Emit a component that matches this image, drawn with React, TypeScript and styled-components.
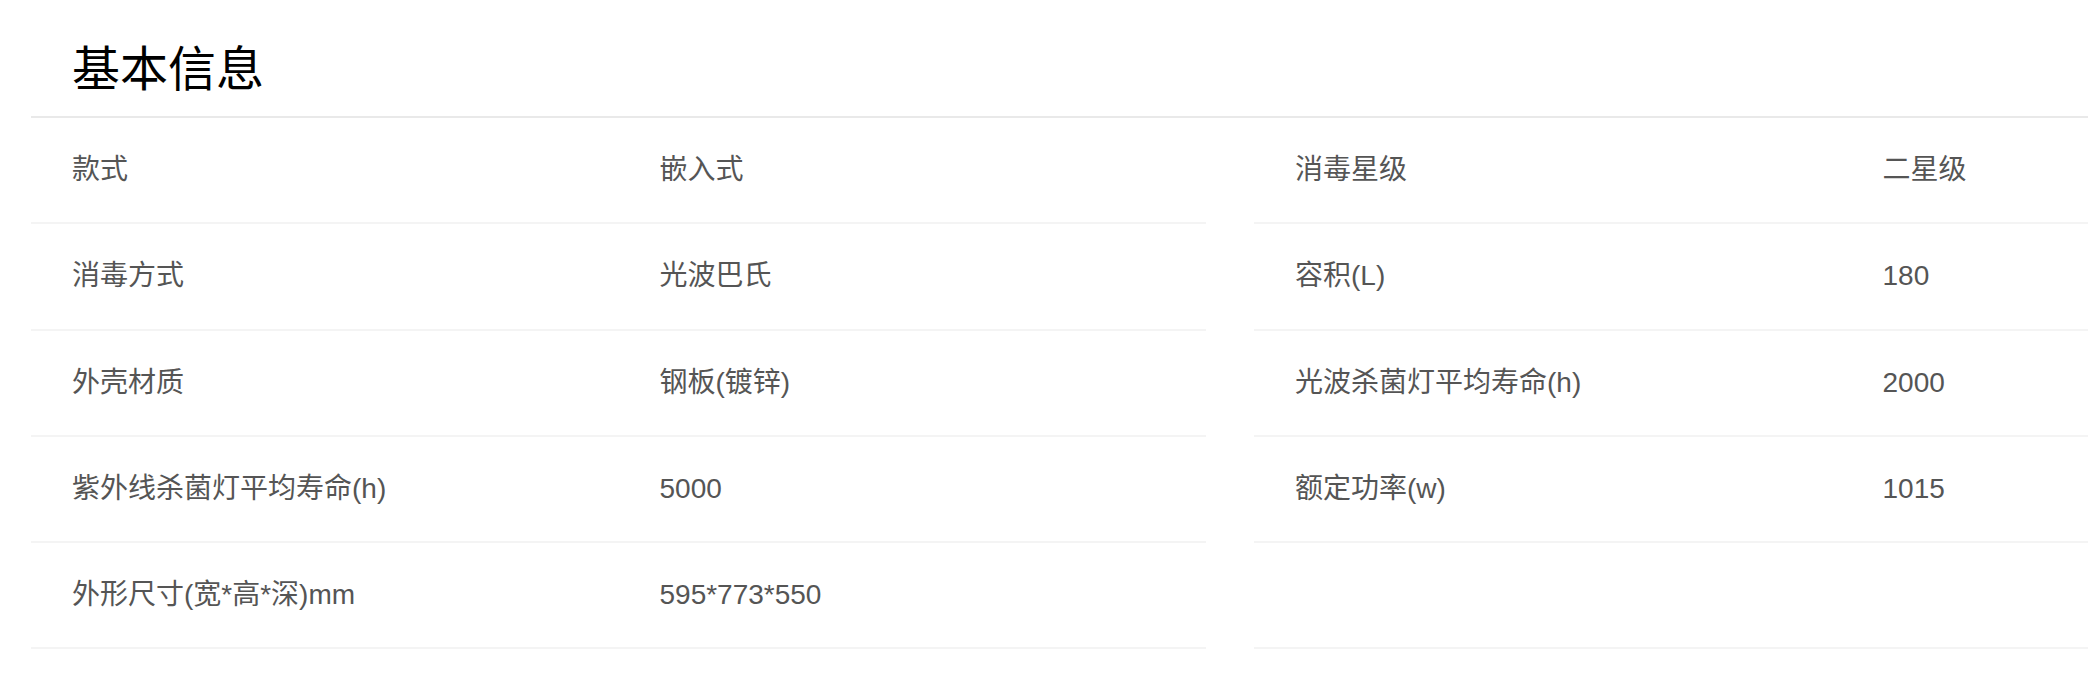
import styled, { createGlobalStyle } from "styled-components";

const GlobalStyle = createGlobalStyle`
  html, body {
    margin: 0;
    padding: 0;
    background: #ffffff;
    overflow: hidden;
  }
  body {
    font-family: "Liberation Sans", "Noto Sans CJK SC", sans-serif;
  }
`;

const leftRows: [string, string][] = [
  ["款式", "嵌入式"],
  ["消毒方式", "光波巴氏"],
  ["外壳材质", "钢板(镀锌)"],
  ["紫外线杀菌灯平均寿命(h)", "5000"],
  ["外形尺寸(宽*高*深)mm", "595*773*550"],
];

const rightRows: [string, string][] = [
  ["消毒星级", "二星级"],
  ["容积(L)", "180"],
  ["光波杀菌灯平均寿命(h)", "2000"],
  ["额定功率(w)", "1015"],
  ["", ""],
];

export default function App() {
  return (
    <>
      <GlobalStyle />
      <Page>
        <Header>
          <Title>基本信息</Title>
        </Header>
        <Tables>
          {[leftRows, rightRows].map((rows, t) => (
            <Table key={t}>
              {rows.map(([label, value], i) => (
                <Row key={i}>
                  <Cell>{label}</Cell>
                  <Cell>{value}</Cell>
                </Row>
              ))}
            </Table>
          ))}
        </Tables>
      </Page>
    </>
  );
}

const Page = styled.div`
  padding-left: 31px;
  width: 2398px;
`;

const Header = styled.div`
  box-sizing: border-box;
  height: 118px;
  padding: 46px 0 0 41px;
  border-bottom: 2px solid #e9e9e9;
`;

const Title = styled.h2`
  margin: 0;
  font-size: 48px;
  line-height: 48px;
  font-weight: 400;
  color: #000000;
`;

const Tables = styled.div`
  display: flex;
  gap: 48px;
`;

const Table = styled.div`
  width: 1176px;
  display: flex;
  flex-direction: column;
`;

const Row = styled.div`
  box-sizing: border-box;
  height: 106.25px;
  display: grid;
  grid-template-columns: 1fr 1fr;
  align-items: center;
  border-bottom: 2px solid #f4f4f4;
`;

const Cell = styled.div`
  padding-left: 41px;
  font-size: 28px;
  line-height: 40px;
  color: #555555;
  white-space: nowrap;
`;
